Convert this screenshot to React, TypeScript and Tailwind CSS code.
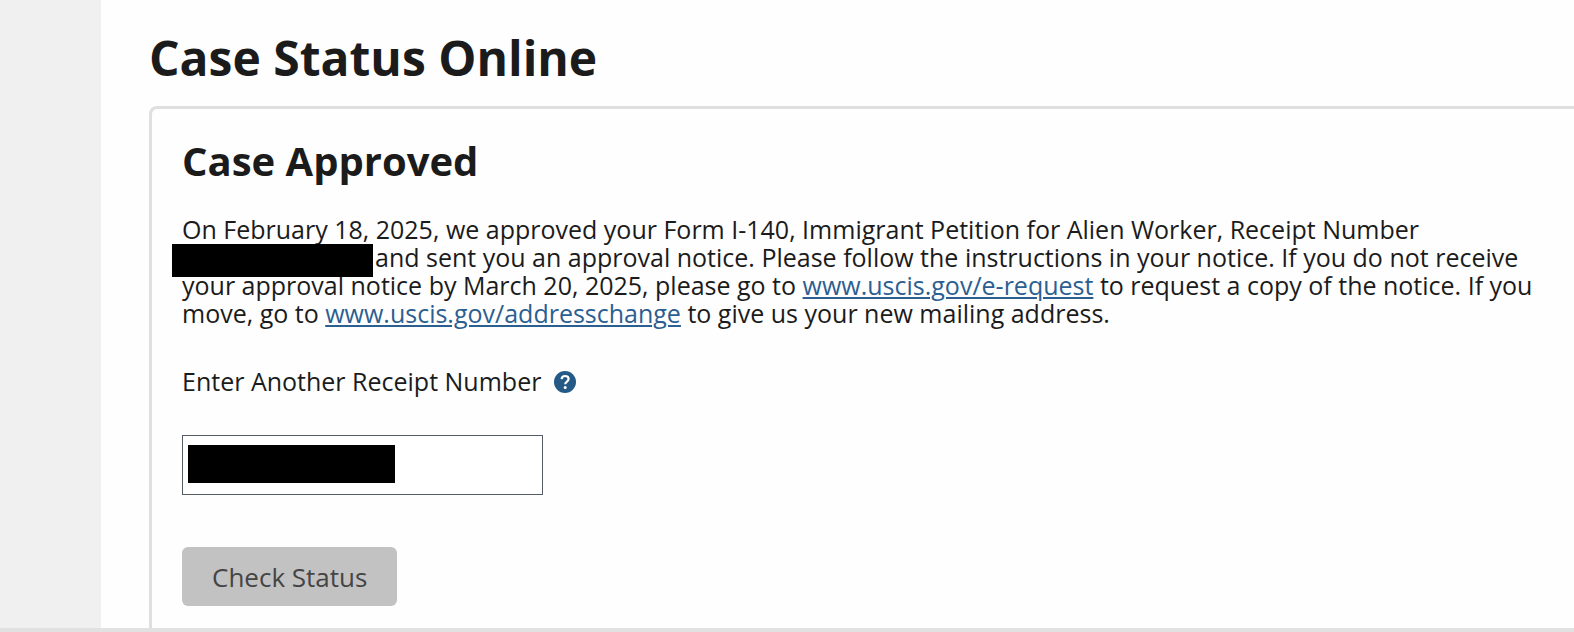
import { useState } from "react";

interface RedactionProps {
  className: string;
}

const Redaction = ({ className }: RedactionProps) => (
  <span aria-hidden="true" className={`absolute bg-black ${className}`} />
);

const HelpIcon = () => (
  <svg viewBox="0 0 24 24" className="size-6" aria-hidden="true">
    <circle cx="12" cy="13" r="11" fill="#255a87" />
    <path
      d="M8.6 10.1C8.8 8 10.2 7 12.1 7C14.1 7 15.6 8.2 15.6 10.1C15.6 12.6 12.2 12.6 12.2 15.2"
      fill="none"
      stroke="#fff"
      strokeWidth="2.2"
    />
    <circle cx="12.2" cy="18.4" r="1.5" fill="#fff" />
  </svg>
);

const linkStyles = "text-[#2c5f91] underline decoration-2 underline-offset-2";

export default function App() {
  const [receipt, setReceipt] = useState("");

  return (
    <div className="flex border-b-4 border-[#e1e1e1] bg-[#fefefe] font-['Open_Sans',sans-serif] text-[#1b1b1b]">
      {/* Page gutter */}
      <div className="w-[101px] shrink-0 bg-[#f0f0f0]" />

      <main className="grow pl-12 pt-7">
        <h1 className="text-5xl leading-[60px] font-bold">Case Status Online</h1>

        <section className="mt-[18px] rounded-tl-lg border-t-3 border-l-3 border-[#dfdfdf] pt-[26px] pr-4 pb-[22px] pl-[30px]">
          <h2 className="text-[40px] leading-[52px] font-bold">Case Approved</h2>

          <p className="mt-7 text-[25px] leading-7">
            On February 18, 2025, we approved your Form I-140, Immigrant Petition for Alien Worker, Receipt Number
            <br />
            <span className="relative inline-block w-[193px]">
              <Redaction className="-top-[23px] -left-[10px] h-[33px] w-[201px]" />
            </span>
            and sent you an approval notice. Please follow the instructions in your notice. If you do not receive
            <br />
            your approval notice by March 20, 2025, please go to{" "}
            <a href="https://www.uscis.gov/e-request" className={linkStyles}>
              www.uscis.gov/e-request
            </a>{" "}
            to request a copy of the notice. If you
            <br />
            move, go to{" "}
            <a href="https://www.uscis.gov/addresschange" className={linkStyles}>
              www.uscis.gov/addresschange
            </a>{" "}
            to give us your new mailing address.
          </p>

          <form onSubmit={(e) => e.preventDefault()}>
            <div className="mt-10 flex items-center gap-3">
              <label htmlFor="receipt" className="text-[25px] leading-7">
                Enter Another Receipt Number
              </label>
              <button type="button" aria-label="Receipt number help">
                <HelpIcon />
              </button>
            </div>

            <div className="relative mt-10 w-[361px]">
              <input
                id="receipt"
                type="text"
                value={receipt}
                onChange={(e) => setReceipt(e.target.value)}
                className="block h-[60px] w-full border border-[#565c65] bg-white px-2 text-[25px]"
              />
              <Redaction className="top-[10px] left-[6px] h-[38px] w-[207px]" />
            </div>

            <button
              type="submit"
              disabled={!receipt}
              className="mt-[52px] block h-[59px] rounded-md bg-[#c2c2c2] px-[30px] text-[26px] leading-7 text-[#454545]"
            >
              Check Status
            </button>
          </form>
        </section>
      </main>
    </div>
  );
}
